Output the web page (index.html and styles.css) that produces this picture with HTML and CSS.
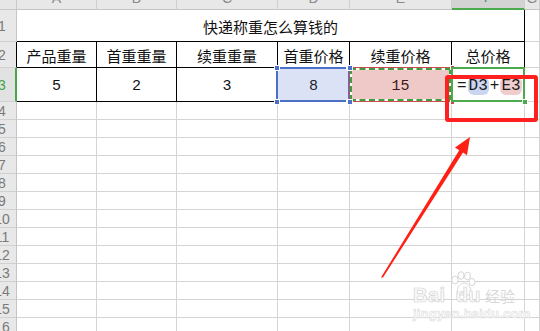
FILE: index.html
```html
<!DOCTYPE html>
<html lang="zh">
<head>
<meta charset="utf-8">
<title>快递称重怎么算钱的</title>
<link rel="stylesheet" href="styles.css">
</head>
<body>
<div class="page">
  <div class="sheet">
    <div class="corner"></div>
    <div class="ch"><span>A</span></div>
    <div class="ch"><span>B</span></div>
    <div class="ch"><span>C</span></div>
    <div class="ch"><span>D</span></div>
    <div class="ch"><span>E</span></div>
    <div class="ch ch-sel"><span>F</span></div>
    <div class="ch"><span>G</span></div>

    <div class="rh"><span>1</span></div>
    <div class="title">快递称重怎么算钱的</div>
    <div class="c"></div>

    <div class="rh rh-black"><span>2</span></div>
    <div class="c hd">产品重量</div>
    <div class="c hd">首重重量</div>
    <div class="c hd">续重重量</div>
    <div class="c hd">首重价格</div>
    <div class="c hd">续重价格</div>
    <div class="c hd">总价格</div>
    <div class="c"></div>

    <div class="rh rh-active"><span>3</span></div>
    <div class="c num blk">5</div>
    <div class="c num blk">2</div>
    <div class="c num blk">3</div>
    <div class="c num ref-d"><span class="val">8</span><i class="h tl"></i><i class="h tr"></i><i class="h bl"></i><i class="h br"></i></div>
    <div class="c num ref-e"><span class="val">15</span><i class="h tl"></i><i class="h tr"></i><i class="h bl"></i><i class="h br"></i></div>
    <div class="c formula"><span class="op">=</span><span class="pill pd">D3</span><span class="op">+</span><span class="pill pe">E3</span><i class="h br"></i></div>
    <div class="c"></div>

    <div class="rh"><span>4</span></div><div class="c"></div><div class="c"></div><div class="c"></div><div class="c"></div><div class="c"></div><div class="c"></div><div class="c"></div>
    <div class="rh"><span>5</span></div><div class="c"></div><div class="c"></div><div class="c"></div><div class="c"></div><div class="c"></div><div class="c"></div><div class="c"></div>
    <div class="rh"><span>6</span></div><div class="c"></div><div class="c"></div><div class="c"></div><div class="c"></div><div class="c"></div><div class="c"></div><div class="c"></div>
    <div class="rh"><span>7</span></div><div class="c"></div><div class="c"></div><div class="c"></div><div class="c"></div><div class="c"></div><div class="c"></div><div class="c"></div>
    <div class="rh"><span>8</span></div><div class="c"></div><div class="c"></div><div class="c"></div><div class="c"></div><div class="c"></div><div class="c"></div><div class="c"></div>
    <div class="rh"><span>9</span></div><div class="c"></div><div class="c"></div><div class="c"></div><div class="c"></div><div class="c"></div><div class="c"></div><div class="c"></div>
    <div class="rh"><span>10</span></div><div class="c"></div><div class="c"></div><div class="c"></div><div class="c"></div><div class="c"></div><div class="c"></div><div class="c"></div>
    <div class="rh"><span>11</span></div><div class="c"></div><div class="c"></div><div class="c"></div><div class="c"></div><div class="c"></div><div class="c"></div><div class="c"></div>
    <div class="rh"><span>12</span></div><div class="c"></div><div class="c"></div><div class="c"></div><div class="c"></div><div class="c"></div><div class="c"></div><div class="c"></div>
    <div class="rh"><span>13</span></div><div class="c"></div><div class="c"></div><div class="c"></div><div class="c"></div><div class="c"></div><div class="c"></div><div class="c"></div>
    <div class="rh"><span>14</span></div><div class="c"></div><div class="c"></div><div class="c"></div><div class="c"></div><div class="c"></div><div class="c"></div><div class="c"></div>
    <div class="rh"><span>15</span></div><div class="c"></div><div class="c"></div><div class="c"></div><div class="c"></div><div class="c"></div><div class="c"></div><div class="c"></div>
    <div class="rh"><span>16</span></div><div class="c"></div><div class="c"></div><div class="c"></div><div class="c"></div><div class="c"></div><div class="c"></div><div class="c"></div>
  </div>

  <div class="redbox"></div>

  <svg class="arrow" width="540" height="331" viewBox="0 0 540 331">
    <polygon points="381,277.5 383,277.5 463,152.6 467,155.3 470,137 455,147.6 459.2,150.2" fill="#ff2015"/>
  </svg>

  <div class="watermark">
    <svg class="paw" width="30" height="26" viewBox="0 0 30 26">
      <g fill="#ffffff" stroke="#d6d6d6" stroke-width="1">
        <ellipse cx="8" cy="9" rx="3.2" ry="4"/>
        <ellipse cx="14" cy="4.5" rx="3" ry="3.8"/>
        <ellipse cx="20.5" cy="5" rx="3" ry="3.8"/>
        <ellipse cx="25" cy="11" rx="3" ry="3.6"/>
        <path d="M10 22 C10 15 14 12 17 12 C21 12 24 16 24 21 C24 25 19 24 17 24 C14 24 10 25 10 22 Z"/>
      </g>
    </svg>
    <div class="wm-line"><span class="wm-big">Bai</span><span class="wm-big wm-du">du</span><span class="wm-cn">经验</span></div>
    <div class="wm-url">jingyan.baidu.com</div>
  </div>
</div>
</body>
</html>
```
FILE: styles.css
```css
html, body {
  margin: 0;
  padding: 0;
  background: #ffffff;
  overflow: hidden;
}

.page {
  position: relative;
  width: 540px;
  height: 331px;
  overflow: hidden;
}

.sheet {
  display: grid;
  grid-template-columns: 17px 80px 80px 101px 72px 102px 73px 1fr;
  grid-template-rows: 10px 32px 26px 34px repeat(13, 18px);
  width: 540px;
  font-family: "Noto Sans CJK SC", "Liberation Sans", sans-serif;
  color: #111;
}

.sheet > div {
  box-sizing: border-box;
  border-right: 1px solid #d4d4d4;
  border-bottom: 1px solid #d4d4d4;
  display: flex;
  align-items: center;
  justify-content: center;
  line-height: 1;
}

.corner {
  background: #e6e6e6;
  border-right-color: #c8c8c8 !important;
  border-bottom-color: #c8c8c8 !important;
}

.sheet > .ch {
  background: #e8e8e8;
  border-right-color: #cfcfcf;
  border-bottom-color: #c4c4c4;
  align-items: flex-end;
  overflow: hidden;
  font-family: "Liberation Sans", sans-serif;
  font-size: 14px;
  color: #8a8a8a;
}

.ch span {
  line-height: 14px;
  margin-bottom: 4px;
}

.sheet > .ch-sel {
  background: #d3d3d3;
  border-bottom: 2px solid #4caa4c;
  color: #3c9a6c;
}

.sheet > .rh {
  background: #e8e8e8;
  border-right-color: #c4c4c4;
  border-bottom-color: #d0d0d0;
  justify-content: flex-start;
  overflow: hidden;
  font-family: "Liberation Sans", sans-serif;
  font-size: 14px;
  color: #7a7a7a;
}

.rh span {
  flex: 0 0 30px;
  text-align: center;
  margin-left: -13px;
  padding-top: 1px;
}

.sheet > .rh-black {
  border-right-color: #000;
}

.sheet > .rh-active {
  border-right: 2px solid #45a845;
  background: #e2e2e2;
  color: #3fa343;
}

.sheet > .title {
  grid-column: span 6;
  border-right-color: #000;
  border-bottom-color: #000;
  font-size: 15px;
  padding-top: 1px;
}

.sheet > .hd {
  border-right-color: #000;
  border-bottom-color: #000;
  font-size: 15px;
  padding-top: 2px;
}

.sheet > .num {
  font-family: "Liberation Mono", "DejaVu Sans Mono", monospace;
  font-size: 15px;
  padding-top: 3px;
  position: relative;
}

.sheet > .blk {
  border-right-color: #000;
  border-bottom-color: #000;
}

.val {
  position: relative;
  z-index: 1;
}

/* D3 reference (blue) */
.sheet > .ref-d {
  background: #dce2f5;
  border-bottom-color: #000;
  color: #1a1f33;
}

.ref-d::before {
  content: "";
  position: absolute;
  left: -2px;
  top: -1px;
  right: -1px;
  bottom: -1px;
  border: 2px solid #4a70c8;
}

.ref-d .h {
  background: #4a70c8;
}

/* E3 reference (red with marching ants) */
.sheet > .ref-e {
  background: #efc8c8;
  border-bottom-color: #000;
  color: #3a1a1a;
  isolation: isolate;
}

.ref-e::before {
  content: "";
  position: absolute;
  left: -1px;
  top: -1px;
  right: -1px;
  bottom: -1px;
  border: 1px solid #cc4c4c;
}

.ref-e::after {
  content: "";
  position: absolute;
  left: 0;
  top: 0;
  right: 0;
  bottom: 0;
  border: 2px dashed #3e9e3e;
  background: linear-gradient(#efc8c8, #efc8c8) padding-box, #ffffff border-box;
  z-index: 0;
}

.ref-e .h {
  background: #cc4c4c;
  width: 5px;
  height: 5px;
}

.h {
  position: absolute;
  width: 6px;
  height: 6px;
  box-sizing: border-box;
  border: 1px solid #ffffff;
  z-index: 2;
}

.h.tl { left: -4px; top: -3px; }
.h.tr { right: -4px; top: -3px; }
.h.bl { left: -4px; bottom: -4px; }
.h.br { right: -4px; bottom: -4px; }

/* F3 active cell with formula */
.sheet > .formula {
  position: relative;
  justify-content: flex-start;
  padding-left: 5px;
  padding-top: 3px;
  font-family: "Liberation Mono", "DejaVu Sans Mono", monospace;
  font-size: 16px;
  color: #1a1a1a;
  border-right-color: #000;
  border-bottom-color: #000;
}

.formula::before {
  content: "";
  position: absolute;
  left: -1px;
  top: -1px;
  right: -1px;
  bottom: -1px;
  border: 2px solid #4caa4c;
}

.formula .h {
  background: #4caa4c;
}

.op {
  display: inline-block;
}

.pill {
  display: inline-block;
  padding: 1px 1px 1px 1px;
  border-radius: 6px;
  margin: 0 1px;
}

.pd { background: #c9d5f1; }
.pe { background: #f1cccc; }

/* overlays */
.redbox {
  position: absolute;
  left: 445px;
  top: 75px;
  width: 93px;
  height: 47px;
  box-sizing: border-box;
  border: 4px solid #ff2020;
  border-radius: 3px;
}

.arrow {
  position: absolute;
  left: 0;
  top: 0;
}

.watermark {
  position: absolute;
  left: 411px;
  top: 271px;
  width: 104px;
  height: 50px;
  font-family: "Liberation Sans", sans-serif;
  color: #fbfbfb;
  line-height: 1;
}

.paw {
  position: absolute;
  left: 36px;
  top: 0;
}

.wm-line {
  position: absolute;
  left: 2px;
  top: 14px;
  display: flex;
  align-items: baseline;
  white-space: nowrap;
}

.wm-big {
  font-size: 20px;
  font-weight: bold;
  -webkit-text-stroke: 0.7px #d3d3d3;
  letter-spacing: 0.5px;
}

.wm-du {
  margin-left: 10px;
}

.wm-cn {
  font-family: "Noto Sans CJK SC", sans-serif;
  font-size: 15px;
  line-height: 1;
  color: #d9d9d9;
  margin-left: 4px;
}

.wm-url {
  position: absolute;
  left: 2px;
  top: 36px;
  font-size: 13px;
  font-weight: bold;
  white-space: nowrap;
  -webkit-text-stroke: 0.5px #dadada;
  letter-spacing: 0.2px;
}
```
